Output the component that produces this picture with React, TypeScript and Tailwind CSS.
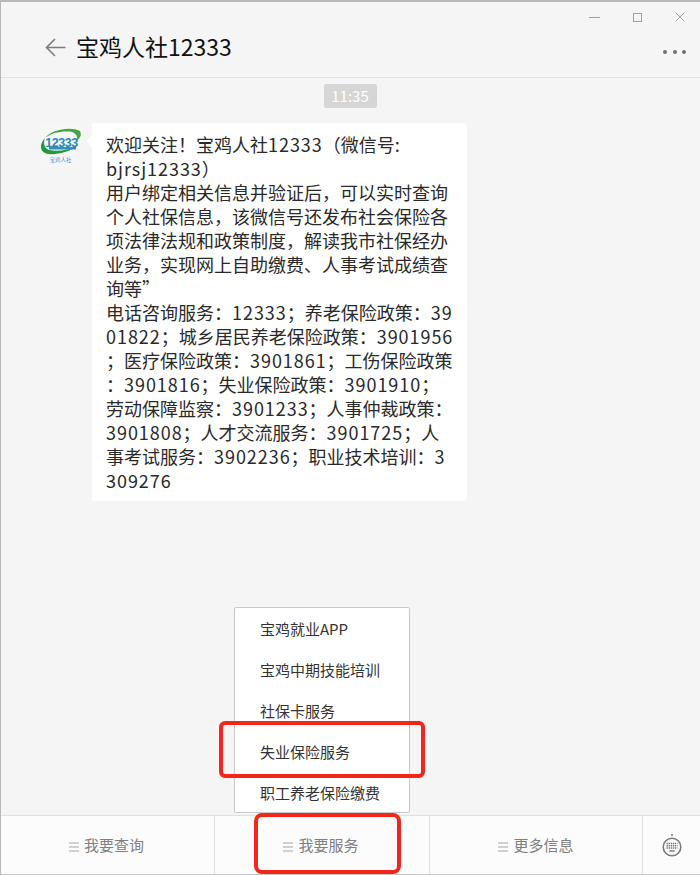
import React from "react";

const lines = [
  "欢迎关注！宝鸡人社12333（微信号:",
  "bjrsj12333）",
  "用户绑定相关信息并验证后，可以实时查询",
  "个人社保信息，该微信号还发布社会保险各",
  "项法律法规和政策制度，解读我市社保经办",
  "业务，实现网上自助缴费、人事考试成绩查",
  "询等”",
  "电话咨询服务：12333；养老保险政策：39",
  "01822；城乡居民养老保险政策：3901956",
  "；医疗保险政策：3901861；工伤保险政策",
  "：3901816；失业保险政策：3901910；",
  "劳动保障监察：3901233；人事仲裁政策：",
  "3901808；人才交流服务：3901725；人",
  "事考试服务：3902236；职业技术培训：3",
  "309276",
];

const menu = ["宝鸡就业APP", "宝鸡中期技能培训", "社保卡服务", "失业保险服务", "职工养老保险缴费"];

function Line({ text }: { text: string }) {
  const parts = text.split(/([0-9a-zA-Z]+)/);
  return (
    <div className="whitespace-nowrap">
      {parts.map((p, i) =>
        i % 2 === 1 ? (
          <span key={i} className="tracking-[0.95px]">{p}</span>
        ) : (
          <span key={i}>{p}</span>
        )
      )}
    </div>
  );
}

function Bars() {
  return (
    <span className="flex flex-col gap-[2px] w-[10px] mr-[5px] mt-[3px]">
      <span className="h-[2px] bg-[#d0d0d0]" />
      <span className="h-[2px] bg-[#d0d0d0]" />
      <span className="h-[2px] bg-[#d0d0d0]" />
    </span>
  );
}

function Tab({ label, className }: { label: string; className: string }) {
  return (
    <div className={`flex items-center justify-center border-r border-[#e0e0e0] text-[15px] text-[#808080] ${className}`}>
      <Bars />
      {label}
    </div>
  );
}

function Logo() {
  return (
    <svg width="44" height="44" viewBox="0 0 44 44" className="shrink-0">
      <rect width="44" height="44" fill="#f6f6f6" />
      <path d="M7 15C13 7 32 3 42 8C44 12 42 15 39 18C40 12 37 9 31 8.5C22 8 13 10 7 15Z" fill="#45a63f" />
      <path d="M7 15C-1 24 3 33 17 31C26 30 34 27 39 23C30 27 20 29 11 27C6 25 5 20 7 15Z" fill="#1f9a3c" />
      <text x="23.5" y="23.5" textAnchor="middle" fontSize="12.5" fontWeight="700" fill="#2a86b5" fontFamily="Liberation Sans, sans-serif" letterSpacing="-0.5">12333</text>
      <rect x="11" y="24" width="27" height="2.5" fill="#2f8fb8" />
      <text x="22.5" y="39" textAnchor="middle" fontSize="5.5" fill="#5f8fc0" fontFamily="Noto Sans CJK SC, sans-serif">宝鸡人社</text>
    </svg>
  );
}

export default function App() {
  return (
    <div
      className="relative w-[700px] h-[875px] overflow-hidden bg-[#f5f5f5] border-t-2 border-l border-[#b8b8b8] flex flex-col"
      style={{ fontFamily: '"Noto Sans CJK SC", "Noto Sans", sans-serif' }}
    >
      <header className="h-[76px] shrink-0 border-b border-[#e3e3e3] relative flex items-center pl-[44px] pt-[14px]">
        <svg width="21" height="19" viewBox="0 0 21 19" fill="none" stroke="#7d7d7d" strokeWidth="1.6" className="mt-[1px]">
          <path d="M20.5 9.5H1.5M10 1L1.5 9.5L10 18" />
        </svg>
        <h1 className="ml-[10px] text-[23px] leading-none text-[#111] font-normal whitespace-nowrap">宝鸡人社12333</h1>
        <div className="absolute right-[15px] top-[10px] flex items-center gap-[33px]">
          <svg width="11" height="9" viewBox="0 0 11 9" fill="none" stroke="#a0a0a0">
            <path d="M0 4.5H11" />
          </svg>
          <svg width="9" height="9" viewBox="0 0 9 9" fill="none" stroke="#a0a0a0">
            <rect x=".5" y=".5" width="8" height="8" />
          </svg>
          <svg width="10" height="10" viewBox="0 0 10 10" fill="none" stroke="#a0a0a0">
            <path d="M.5.5l9 9M9.5.5l-9 9" />
          </svg>
        </div>
        <div className="absolute right-[14px] top-[48px] flex gap-[5.5px]">
          <span className="w-[4px] h-[4px] rounded-full bg-[#707070]" />
          <span className="w-[4px] h-[4px] rounded-full bg-[#707070]" />
          <span className="w-[4px] h-[4px] rounded-full bg-[#707070]" />
        </div>
      </header>

      <main className="flex-1 min-h-0 flex flex-col">
        <div className="self-center mt-[6px] -ml-[1px] w-[53px] h-[24px] rounded-[2px] bg-[#d6d6d6] text-white text-[15px] leading-[24px] text-center">11:35</div>
        <div className="flex mt-[15px] pl-[37px]">
          <Logo />
          <div className="relative ml-[10px] w-[375px] h-[378px] bg-white rounded-[3px] pl-[14px] pt-[9px] text-[18px] leading-[24px] text-[#2a2a2a]">
            <span className="absolute -left-[4px] top-[14px] w-[8px] h-[8px] bg-white rotate-45" />
            {lines.map((l) => (
              <Line key={l} text={l} />
            ))}
          </div>
        </div>
      </main>

      <footer className="h-[60px] shrink-0 bg-[#fcfcfc] border-t border-[#e0e0e0] border-b border-b-[#c8c8c8] flex">
        <Tab label="我要查询" className="w-[214px] pr-[2px]" />
        <Tab label="我要服务" className="w-[215px] pr-[2px]" />
        <Tab label="更多信息" className="w-[213px]" />
        <div className="flex-1 flex items-center justify-center">
          <svg width="20" height="24" viewBox="0 0 20 24" fill="none">
            <circle cx="10" cy="2" r="1" fill="#7a7a7a" />
            <circle cx="10" cy="14" r="8.8" stroke="#7a7a7a" strokeWidth="1.6" />
            <path d="M4.5 10.5h11M4.5 12.7h11M4.5 14.9h11" stroke="#7a7a7a" strokeWidth="1.5" strokeDasharray="1.4 .7" />
            <path d="M7.5 18h5" stroke="#7a7a7a" strokeWidth="1.5" />
          </svg>
        </div>
      </footer>

      <div className="absolute left-[233px] top-[605px] w-[176px] h-[206px] bg-white border border-[#c8c8c8] rounded-[2px] pt-[1px] flex flex-col">
        {menu.map((m) => (
          <div key={m} className="h-[41px] shrink-0 pl-[25px] flex items-center text-[15px] text-[#333] whitespace-nowrap">{m}</div>
        ))}
      </div>

      <div className="absolute left-[218px] top-[719px] w-[206px] h-[57px] border-[4px] border-[#f4261c] rounded-[6px]" />
      <div className="absolute left-[253px] top-[811px] w-[147px] h-[61px] border-[4px] border-[#f4261c] rounded-[8px]" />
    </div>
  );
}
